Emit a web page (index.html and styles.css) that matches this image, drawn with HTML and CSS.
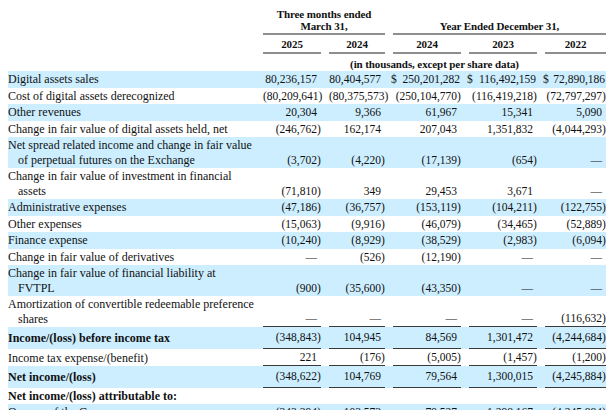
FILE: index.html
```html
<!DOCTYPE html>
<html>
<head>
<meta charset="utf-8">
<link rel="stylesheet" href="styles.css">
</head>
<body>
<table class="fin">
  <colgroup>
    <col class="c-label">
    <col class="c1"><col class="c2"><col class="c3"><col class="c4"><col class="c5">
  </colgroup>
  <thead>
    <tr class="h1">
      <th></th>
      <th colspan="2" class="hl">Three months ended<br>March 31,</th>
      <th colspan="3" class="hl bot">Year Ended December 31,</th>
    </tr>
    <tr class="h2">
      <th></th>
      <th class="hl">2025</th><th class="hl">2024</th><th class="hl">2024</th><th class="hl">2023</th><th class="hl">2022</th>
    </tr>
    <tr class="h3">
      <th></th>
      <th colspan="5">(in thousands, except per share data)</th>
    </tr>
  </thead>
  <tbody>
    <tr class="sh">
      <td class="lb">Digital assets sales</td>
      <td class="n">80,236,157</td>
      <td class="n">80,404,577</td>
      <td class="n"><div class="d"><span>$</span><span>250,201,282</span></div></td>
      <td class="n"><div class="d"><span>$</span><span>116,492,159</span></div></td>
      <td class="n"><div class="d"><span>$</span><span>72,890,186</span></div></td>
    </tr>
    <tr>
      <td class="lb">Cost of digital assets derecognized</td>
      <td class="n">(80,209,641<span class="p">)</span></td>
      <td class="n">(80,375,573<span class="p">)</span></td>
      <td class="n">(250,104,770<span class="p">)</span></td>
      <td class="n">(116,419,218<span class="p">)</span></td>
      <td class="n">(72,797,297<span class="p">)</span></td>
    </tr>
    <tr class="sh">
      <td class="lb">Other revenues</td>
      <td class="n">20,304</td>
      <td class="n">9,366</td>
      <td class="n">61,967</td>
      <td class="n">15,341</td>
      <td class="n">5,090</td>
    </tr>
    <tr>
      <td class="lb">Change in fair value of digital assets held, net</td>
      <td class="n">(246,762<span class="p">)</span></td>
      <td class="n">162,174</td>
      <td class="n">207,043</td>
      <td class="n">1,351,832</td>
      <td class="n">(4,044,293<span class="p">)</span></td>
    </tr>
    <tr class="sh">
      <td class="lb">Net spread related income and change in fair value<span class="cont">of perpetual futures on the Exchange</span></td>
      <td class="n">(3,702<span class="p">)</span></td>
      <td class="n">(4,220<span class="p">)</span></td>
      <td class="n">(17,139<span class="p">)</span></td>
      <td class="n">(654<span class="p">)</span></td>
      <td class="n">—</td>
    </tr>
    <tr>
      <td class="lb">Change in fair value of investment in financial<span class="cont">assets</span></td>
      <td class="n">(71,810<span class="p">)</span></td>
      <td class="n">349</td>
      <td class="n">29,453</td>
      <td class="n">3,671</td>
      <td class="n">—</td>
    </tr>
    <tr class="sh">
      <td class="lb">Administrative expenses</td>
      <td class="n">(47,186<span class="p">)</span></td>
      <td class="n">(36,757<span class="p">)</span></td>
      <td class="n">(153,119<span class="p">)</span></td>
      <td class="n">(104,211<span class="p">)</span></td>
      <td class="n">(122,755<span class="p">)</span></td>
    </tr>
    <tr>
      <td class="lb">Other expenses</td>
      <td class="n">(15,063<span class="p">)</span></td>
      <td class="n">(9,916<span class="p">)</span></td>
      <td class="n">(46,079<span class="p">)</span></td>
      <td class="n">(34,465<span class="p">)</span></td>
      <td class="n">(52,889<span class="p">)</span></td>
    </tr>
    <tr class="sh">
      <td class="lb">Finance expense</td>
      <td class="n">(10,240<span class="p">)</span></td>
      <td class="n">(8,929<span class="p">)</span></td>
      <td class="n">(38,529<span class="p">)</span></td>
      <td class="n">(2,983<span class="p">)</span></td>
      <td class="n">(6,094<span class="p">)</span></td>
    </tr>
    <tr>
      <td class="lb">Change in fair value of derivatives</td>
      <td class="n">—</td>
      <td class="n">(526<span class="p">)</span></td>
      <td class="n">(12,190<span class="p">)</span></td>
      <td class="n">—</td>
      <td class="n">—</td>
    </tr>
    <tr class="sh">
      <td class="lb">Change in fair value of financial liability at<span class="cont">FVTPL</span></td>
      <td class="n">(900<span class="p">)</span></td>
      <td class="n">(35,600<span class="p">)</span></td>
      <td class="n">(43,350<span class="p">)</span></td>
      <td class="n">—</td>
      <td class="n">—</td>
    </tr>
    <tr>
      <td class="lb">Amortization of convertible redeemable preference<span class="cont">shares</span></td>
      <td class="n ul">—</td>
      <td class="n ul">—</td>
      <td class="n ul">—</td>
      <td class="n ul">—</td>
      <td class="n ul">(116,632<span class="p">)</span></td>
    </tr>
    <tr class="sh tot">
      <td class="lb b">Income/(loss) before income tax</td>
      <td class="n ul">(348,843<span class="p">)</span></td>
      <td class="n ul">104,945</td>
      <td class="n ul">84,569</td>
      <td class="n ul">1,301,472</td>
      <td class="n ul">(4,244,684<span class="p">)</span></td>
    </tr>
    <tr>
      <td class="lb">Income tax expense/(benefit)</td>
      <td class="n ul">221</td>
      <td class="n ul">(176<span class="p">)</span></td>
      <td class="n ul">(5,005<span class="p">)</span></td>
      <td class="n ul">(1,457<span class="p">)</span></td>
      <td class="n ul">(1,200<span class="p">)</span></td>
    </tr>
    <tr class="sh tot">
      <td class="lb b">Net income/(loss)</td>
      <td class="n ul">(348,622<span class="p">)</span></td>
      <td class="n ul">104,769</td>
      <td class="n ul">79,564</td>
      <td class="n ul">1,300,015</td>
      <td class="n ul">(4,245,884<span class="p">)</span></td>
    </tr>
    <tr>
      <td class="lb b">Net income/(loss) attributable to:</td>
      <td class="n"></td><td class="n"></td><td class="n"></td><td class="n"></td><td class="n"></td>
    </tr>
    <tr class="sh">
      <td class="lb">Owners of the Company</td>
      <td class="n">(343,394<span class="p">)</span></td>
      <td class="n">103,573</td>
      <td class="n">79,527</td>
      <td class="n">1,298,167</td>
      <td class="n">(4,245,884<span class="p">)</span></td>
    </tr>
  </tbody>
</table>
</body>
</html>
```

FILE: styles.css
```css
html, body {
  margin: 0;
  padding: 0;
  background: #ffffff;
}
body {
  padding: 8px 9px 0 8px;
  font-family: "Liberation Serif", "Times New Roman", serif;
  color: #111;
  overflow: hidden;
}
.fin {
  border-collapse: collapse;
  table-layout: fixed;
  width: 598px;
}
.c-label { width: 247px; }
.c1 { width: 66px; }
.c2 { width: 64px; }
.c3 { width: 76px; }
.c4 { width: 76px; }
.c5 { width: 69px; }

th {
  font-weight: bold;
  font-size: 11px;
  line-height: 12px;
  text-align: center;
  padding: 0 0 0 8px;
  vertical-align: bottom;
  letter-spacing: -0.1px;
}
.hl {
  background: linear-gradient(#8e8e8e, #8e8e8e) no-repeat right bottom / calc(100% - 8px) 2px;
}
.h1 th { padding-bottom: 3px; }
.h2 th { padding-top: 3px; padding-bottom: 4px; }
.h3 th { padding-top: 4px; padding-bottom: 1px; }

td {
  padding: 1px 0;
  line-height: 14.5px;
  vertical-align: bottom;
}
.lb {
  font-size: 12px;
  white-space: nowrap;
}
.lb.b { font-weight: bold; }
.cont {
  display: block;
  padding-left: 10px;
}
.n {
  font-size: 11.5px;
  text-align: right;
  padding-left: 8px;
  padding-right: 4px;
  white-space: nowrap;
}
.p {
  display: inline-block;
  width: 4px;
  margin-right: -4px;
  text-align: left;
}
.d {
  display: flex;
  justify-content: space-between;
  gap: 3px;
  margin-left: -2px;
  margin-right: -3px;
}
.sh { background: #cceeff; }
.tot td { padding-top: 3px; padding-bottom: 3px; }
.ul {
  background: linear-gradient(#3a3a3a, #3a3a3a) no-repeat right bottom / calc(100% - 8px) 1px;
  padding-bottom: 2px;
}
.tot .ul { padding-bottom: 4px; }
```
